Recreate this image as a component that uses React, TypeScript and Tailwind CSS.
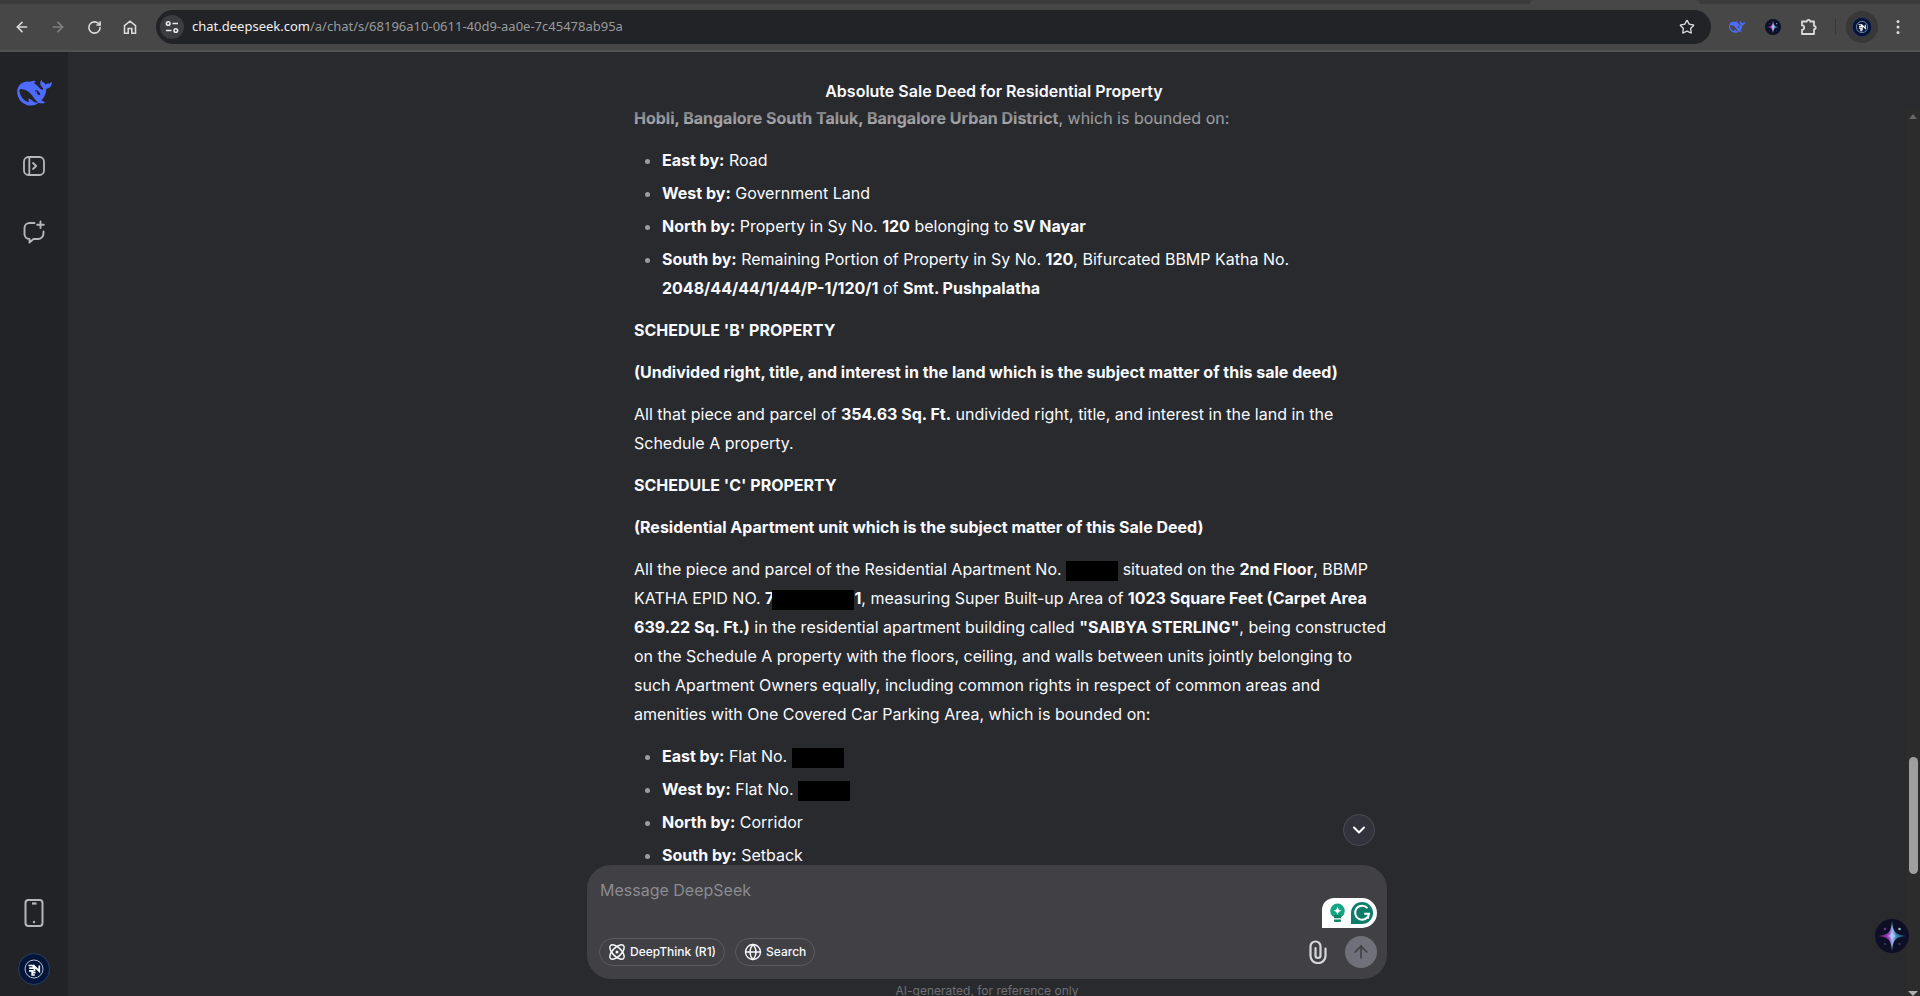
import type { ReactNode } from "react";
import { ArrowLeft, ArrowRight, ArrowUp, ChevronDown, Globe, RotateCw, Star } from "lucide-react";

const WHALE =
  "M23.748 4.482c-.254-.124-.364.113-.512.234-.051.039-.094.09-.137.136-.372.397-.806.657-1.373.626-.829-.046-1.537.214-2.163.848-.133-.782-.575-1.248-1.247-1.548-.352-.156-.708-.311-.955-.65-.172-.241-.219-.51-.305-.774-.055-.16-.11-.323-.293-.35-.2-.031-.278.136-.356.276-.313.572-.434 1.202-.422 1.84.027 1.436.633 2.58 1.838 3.393.137.093.172.187.129.323-.082.28-.18.552-.266.833-.055.179-.137.217-.329.14a5.526 5.526 0 01-1.736-1.18c-.857-.828-1.631-1.742-2.597-2.458a11.365 11.365 0 00-.689-.471c-.985-.957.13-1.743.388-1.836.27-.098.093-.432-.779-.428-.872.004-1.67.295-2.687.684a3.055 3.055 0 01-.465.137 9.597 9.597 0 00-2.883-.102c-1.885.21-3.39 1.102-4.497 2.623C.082 8.606-.231 10.684.152 12.85c.403 2.284 1.569 4.175 3.36 5.653 1.858 1.533 3.997 2.284 6.438 2.14 1.482-.085 3.133-.284 4.994-1.86.47.234.962.327 1.78.397.63.059 1.236-.03 1.705-.128.735-.156.684-.837.419-.961-2.155-1.004-1.682-.595-2.113-.926 1.096-1.296 2.746-2.642 3.392-7.003.05-.347.007-.565 0-.845-.004-.17.035-.237.23-.256a4.173 4.173 0 001.545-.475c1.396-.763 1.96-2.015 2.093-3.517.02-.23-.004-.467-.247-.588zM11.581 18c-2.089-1.642-3.102-2.183-3.52-2.16-.392.024-.321.471-.235.763.09.288.207.486.371.739.114.167.192.416-.113.603-.673.416-1.842-.14-1.897-.167-1.361-.802-2.5-1.86-3.301-3.307-.774-1.393-1.224-2.887-1.298-4.482-.02-.386.093-.522.477-.592a4.696 4.696 0 011.529-.039c2.132.312 3.946 1.265 5.468 2.774.868.86 1.525 1.887 2.202 2.891.72 1.066 1.494 2.082 2.48 2.914.348.292.625.514.891.677-.802.09-2.14.11-3.054-.614zm1-6.44a.306.306 0 01.415-.287.302.302 0 01.2.288.306.306 0 01-.31.307.303.303 0 01-.304-.308zm3.11 1.596c-.2.081-.399.151-.59.16a1.245 1.245 0 01-.798-.254c-.274-.23-.47-.358-.552-.758a1.73 1.73 0 01.016-.588c.07-.327-.008-.537-.239-.727-.187-.156-.426-.199-.688-.199a.559.559 0 01-.254-.078c-.11-.054-.2-.19-.114-.358.028-.054.16-.186.192-.21.356-.202.767-.136 1.146.016.352.144.618.408 1.001.782.391.451.462.576.685.914.176.265.336.537.445.848.067.195-.019.354-.25.452z";

function Whale({ className }: { className: string }) {
  return (
    <svg viewBox="0 3 24 18" className={className} fill="#4d6bfe" aria-hidden="true">
      <path d={WHALE} />
    </svg>
  );
}

function Avatar({ className }: { className: string }) {
  return (
    <svg viewBox="0 0 32 32" className={className} fill="none" aria-hidden="true">
      <circle cx="16" cy="16" r="15.5" fill="#03163a" stroke="#3a4f70" strokeWidth="0.7" />
      <circle cx="16" cy="16" r="9" stroke="#c9d1de" strokeWidth="0.9" />
      <path
        d="M10.500 12.500h4.700v2.600h-4M11 17.800h4.500M16.500 18.200v-4.800l4.800 4.800v-5.700M17.500 19.600h-3.300v2.400h2.600"
        stroke="#fff"
        strokeWidth="1.700"
      />
    </svg>
  );
}

function Sparkle({ className }: { className: string }) {
  return (
    <svg viewBox="0 0 34 34" className={className} aria-hidden="true">
      <defs>
        <linearGradient id="spark" x1="2" y1="17" x2="32" y2="17" gradientUnits="userSpaceOnUse">
          <stop offset="0" stopColor="#5d1c78" />
          <stop offset="0.4" stopColor="#a03fb8" />
          <stop offset="0.52" stopColor="#8fb8ea" />
          <stop offset="0.65" stopColor="#3580ad" />
          <stop offset="1" stopColor="#17466a" />
        </linearGradient>
      </defs>
      <circle cx="17" cy="17" r="17" fill="#0d0f24" />
      <path d="M17 2c.7 10.500 3.500 14.300 14 15-10.500.7-13.300 4.500-14 15-.7-10.500-3.500-14.300-14-15 10.500-.7 13.300-4.500 14-15z" fill="url(#spark)" />
      <path d="M17 11c.5 4 2 5.500 5 6-3 .5-4.500 2-5 6-.5-4-2-5.500-5-6 3-.5 4.500-2 5-6z" fill="#b9d6fa" fillOpacity="0.7" />
      <circle cx="10" cy="10" r="1.300" fill="#6d2f86" />
      <circle cx="24.500" cy="10" r="1.300" fill="#8fb4d6" />
      <circle cx="10" cy="25" r="1.100" fill="#4d2f7c" />
      <circle cx="24.500" cy="25" r="1.100" fill="#2b4f7c" />
    </svg>
  );
}

function ToolbarButton({ label, children }: { label: string; children: ReactNode }) {
  return (
    <button type="button" aria-label={label} className="flex size-5 shrink-0 items-center justify-center">
      {children}
    </button>
  );
}

function BrowserBar() {
  return (
    <header className="shrink-0 border-b-2 border-[#505356] bg-[#474747] text-[#dadada]">
      <div className="flex h-1 justify-end bg-[#3b3b3b]">
        <div className="w-[170px] rounded-t-md bg-[#474747]" />
        <div className="w-[220px]" />
      </div>
      <div className="flex h-[46px] items-center px-3">
        <div className="flex items-center gap-4">
          <ToolbarButton label="Back">
            <ArrowLeft size={16} strokeWidth={2.4} />
          </ToolbarButton>
          <ToolbarButton label="Forward">
            <ArrowRight size={16} strokeWidth={2.4} className="text-[#808080]" />
          </ToolbarButton>
          <ToolbarButton label="Reload">
            <RotateCw size={15} strokeWidth={2.5} />
          </ToolbarButton>
          <ToolbarButton label="Home">
            <svg viewBox="0 0 16 16" className="size-4" fill="none" stroke="currentColor" strokeWidth="1.600">
              <path d="M2.500 6.700 8 2.200l5.500 4.500v7.500H9.800V9.500H6.200v4.700H2.500z" />
            </svg>
          </ToolbarButton>
        </div>
        <div className="ml-4 flex h-[34px] flex-1 items-center rounded-full bg-[#212327] pr-4 pl-1">
          <button
            type="button"
            aria-label="View site information"
            className="flex size-6 shrink-0 items-center justify-center rounded-full bg-[#3c3d40] text-[#e8e8e8]"
          >
            <svg viewBox="0 0 16 16" className="size-4" fill="none" stroke="currentColor" strokeWidth="1.600">
              <circle cx="4.200" cy="4.500" r="1.800" />
              <path d="M8.500 4.500H14M2 11.500h5.500" />
              <circle cx="11.800" cy="11.500" r="1.800" />
            </svg>
          </button>
          <div className="ml-2 flex-1 font-['Noto_Sans',sans-serif] text-[13px] text-[#9a9b9d]">
            <span className="text-[#f0f0f0]">chat.deepseek.com</span>/a/chat/s/68196a10-0611-40d9-aa0e-7c45478ab95a
          </div>
          <button type="button" aria-label="Bookmark this tab">
            <Star size={16} strokeWidth={2} />
          </button>
        </div>
        <div className="ml-4 flex items-center gap-4">
          <ToolbarButton label="DeepSeek">
            <Whale className="h-3 w-4" />
          </ToolbarButton>
          <ToolbarButton label="Assistant extension">
            <Sparkle className="size-4" />
          </ToolbarButton>
          <ToolbarButton label="Extensions">
            <svg viewBox="0 0 18 18" className="size-[18px]" fill="none" stroke="currentColor" strokeWidth="1.800" strokeLinejoin="round">
              <path d="M2 3.500h4.800a1.700 1.700 0 0 1 3.400 0H14v4.300a1.700 1.700 0 0 1 0 3.400V16H2v-4.200a2.200 2.200 0 0 0 0-4.400z" />
            </svg>
          </ToolbarButton>
        </div>
        <div className="ml-4 h-4 w-px bg-[#383838]" />
        <button type="button" aria-label="Profile" className="ml-2.5 flex size-8 items-center justify-center rounded-full bg-[#383838]">
          <Avatar className="size-5" />
        </button>
        <div className="ml-2.5">
          <ToolbarButton label="Browser menu">
            <svg viewBox="0 0 4 16" className="h-4 w-1" fill="currentColor">
              <circle cx="2" cy="2.500" r="1.500" />
              <circle cx="2" cy="8" r="1.500" />
              <circle cx="2" cy="13.500" r="1.500" />
            </svg>
          </ToolbarButton>
        </div>
      </div>
    </header>
  );
}

function Sidebar() {
  return (
    <nav className="flex w-[68px] shrink-0 flex-col items-center bg-[#212327] pt-7 pb-[11px] text-[#b4b7bc]">
      <a href="#home" aria-label="DeepSeek home">
        <Whale className="h-[26px] w-[35px]" />
      </a>
      <button type="button" aria-label="Open sidebar" className="mt-12">
        <svg viewBox="0 0 24 24" className="size-6" fill="none" stroke="currentColor" strokeWidth="1.800">
          <rect x="2" y="3" width="20" height="18" rx="4.500" />
          <path d="M7.300 3v18" />
          <path d="m11 9 3.200 3-3.200 3" strokeLinecap="round" strokeLinejoin="round" />
        </svg>
      </button>
      <button type="button" aria-label="New chat" className="mt-[42px]">
        <svg viewBox="0 0 24 24" className="size-6" fill="none" stroke="currentColor" strokeWidth="1.900" strokeLinecap="round" strokeLinejoin="round">
          <path d="M12.500 3H7.500A5 5 0 0 0 2.500 8v6a5 5 0 0 0 5 5v3.500l4-3.500H16a5.500 5.500 0 0 0 5.500-5.500v-2" />
          <path d="M18.500 1.500v6.500M15.200 4.800h6.600" />
        </svg>
      </button>
      <button type="button" aria-label="Get app" className="mt-auto">
        <svg viewBox="0 0 20 28" className="h-7 w-5" fill="none" stroke="currentColor" strokeWidth="2">
          <rect x="1.500" y="1" width="17" height="26" rx="3" />
          <path d="M8 4.500h4.500" strokeWidth="2.200" />
          <circle cx="10" cy="23" r="1.200" fill="currentColor" stroke="none" />
        </svg>
      </button>
      <button type="button" aria-label="Account" className="mt-[26px]">
        <Avatar className="size-8" />
      </button>
    </nav>
  );
}

function Item({ label, children }: { label: string; children: ReactNode }) {
  return (
    <li>
      <strong>{label} by:</strong> {children}
    </li>
  );
}

function Redacted({ className }: { className: string }) {
  return <span className={`inline-block h-5 bg-black align-middle ${className}`} />;
}

function Deed() {
  return (
    <article className="flex flex-col gap-[13px] pl-[47px] text-base leading-[29px] text-[#f8faff] [&_strong]:font-bold">
      <p>
        <strong>Hobli, Bangalore South Taluk, Bangalore Urban District</strong>, which is bounded on:
      </p>
      <ul className="flex list-disc flex-col gap-1 pl-7 marker:text-[#9a9ca3]">
        <Item label="East">Road</Item>
        <Item label="West">Government Land</Item>
        <Item label="North">
          Property in Sy No. <strong>120</strong> belonging to <strong>SV Nayar</strong>
        </Item>
        <Item label="South">
          Remaining Portion of Property in Sy No. <strong>120</strong>, Bifurcated BBMP Katha No.{" "}
          <strong>2048/44/44/1/44/P-1/120/1</strong> of <strong>Smt. Pushpalatha</strong>
        </Item>
      </ul>
      <p>
        <strong>SCHEDULE 'B' PROPERTY</strong>
      </p>
      <p>
        <strong>(Undivided right, title, and interest in the land which is the subject matter of this sale deed)</strong>
      </p>
      <p>
        All that piece and parcel of <strong>354.63 Sq. Ft.</strong> undivided right, title, and interest in the land in
        the Schedule A property.
      </p>
      <p>
        <strong>SCHEDULE 'C' PROPERTY</strong>
      </p>
      <p>
        <strong>(Residential Apartment unit which is the subject matter of this Sale Deed)</strong>
      </p>
      <p>
        All the piece and parcel of the Residential Apartment No. <Redacted className="w-[52px]" /> situated on the{" "}
        <strong>2nd Floor</strong>, BBMP KATHA EPID NO.{" "}
        <strong>
          7<Redacted className="-ml-0.5 w-[82px]" />1
        </strong>
        , measuring Super Built-up Area of <strong>1023 Square Feet (Carpet Area 639.22 Sq. Ft.)</strong> in the
        residential apartment building called <strong>"SAIBYA STERLING"</strong>, being constructed on the Schedule A
        property with the floors, ceiling, and walls between units jointly belonging to such Apartment Owners equally,
        including common rights in respect of common areas and amenities with One Covered Car Parking Area, which is
        bounded on:
      </p>
      <ul className="flex list-disc flex-col gap-1 pl-7 marker:text-[#9a9ca3]">
        <Item label="East">
          Flat No. <Redacted className="w-[52px]" />
        </Item>
        <Item label="West">
          Flat No. <Redacted className="w-[52px]" />
        </Item>
        <Item label="North">Corridor</Item>
        <Item label="South">Setback</Item>
      </ul>
    </article>
  );
}

function GrammarlyBadge() {
  return (
    <div className="absolute right-2.5 bottom-[51px] flex h-[30px] w-[55px] items-center gap-1.5 rounded-tl-xl rounded-r-[15px] bg-white pl-2">
      <svg viewBox="0 0 15 20" className="h-5 w-[15px]" aria-hidden="true">
        <circle cx="7.500" cy="7.800" r="7.300" fill="#15a683" />
        <path d="M4 12h7v3.300H4zM4 16.500h7v1.200c0 .8-.6 1.300-1.300 1.300H5.300C4.600 19 4 18.500 4 17.700z" fill="#0f8468" />
        <path d="M7.500 3.500c.5 2.800 1.500 3.800 4.200 4.300-2.700.5-3.700 1.500-4.200 4.300-.5-2.800-1.500-3.800-4.200-4.300 2.700-.5 3.700-1.500 4.200-4.300z" fill="#fff" />
      </svg>
      <svg viewBox="0 0 22 22" className="size-[22px]" fill="none" aria-hidden="true">
        <path d="M0 22V11a11 11 0 1 1 11 11z" fill="#0e7c6b" />
        <path d="M16.500 6.200A7 7 0 1 0 18 11.800h-4.800M18 11.800l-1.200 4.700" stroke="#fff" strokeWidth="2" />
      </svg>
    </div>
  );
}

function ToggleChip({ icon, children }: { icon: ReactNode; children: ReactNode }) {
  return (
    <button
      type="button"
      className="flex h-7 items-center gap-1 rounded-full border border-[#5a5a60] px-2 text-xs font-medium text-[#f8faff]"
    >
      {icon}
      {children}
    </button>
  );
}

function Composer() {
  return (
    <form className="relative rounded-3xl bg-[#404045] px-3 pt-[11px] pb-[13px]">
      <textarea
        aria-label="Message DeepSeek"
        placeholder="Message DeepSeek"
        rows={2}
        className="block h-[62px] w-full resize-none px-px text-base leading-7 text-[#f8faff] outline-none placeholder:text-[#8b8b91]"
      />
      <div className="flex h-7 items-center gap-2.5">
        <ToggleChip
          icon={
            <svg viewBox="0 0 18 18" className="size-[18px]" fill="none" stroke="currentColor" strokeWidth="1.500">
              <ellipse cx="9" cy="9" rx="9.200" ry="4.400" transform="rotate(45 9 9)" />
              <ellipse cx="9" cy="9" rx="9.200" ry="4.400" transform="rotate(-45 9 9)" />
              <circle cx="9" cy="9" r="1.500" fill="currentColor" stroke="none" />
            </svg>
          }
        >
          DeepThink (R1)
        </ToggleChip>
        <ToggleChip icon={<Globe size={18} strokeWidth={1.8} />}>Search</ToggleChip>
        <button type="button" aria-label="Attach file" className="ml-auto text-[#d5d6da]">
          <svg viewBox="0 0 18 24" className="h-6 w-[18px]" fill="none" stroke="currentColor" strokeWidth="2.200" strokeLinecap="round">
            <path d="M16.500 8.500V16a7 7 0 0 1-7.500 7A7 7 0 0 1 1.500 16V6.500A4.800 4.800 0 0 1 6.500 1.500a4.800 4.800 0 0 1 5 5V15.500a2.500 2.500 0 0 1-5 0V8" />
          </svg>
        </button>
        <button
          type="submit"
          aria-label="Send message"
          className="-mr-0.5 ml-2 flex size-8 items-center justify-center rounded-full bg-[#70707a] text-[#404045]"
        >
          <ArrowUp size={20} strokeWidth={2} />
        </button>
      </div>
      <GrammarlyBadge />
      <button
        type="button"
        aria-label="Scroll to bottom"
        className="absolute right-3 -top-[51px] flex size-8 items-center justify-center rounded-full border border-[#4b4b55] bg-[#33333e] text-white"
      >
        <ChevronDown size={20} strokeWidth={2.4} />
      </button>
    </form>
  );
}

function Scrollbar() {
  return (
    <div className="mt-1.5 flex w-3.5 shrink-0 flex-col items-center bg-[#2c2c2c]">
      <div className="mt-1 border-x-4 border-b-5 border-x-transparent border-b-[#666]" />
      <div className="flex-[640]" />
      <div className="h-[117px] w-[9px] rounded-full bg-[#9f9f9f]" />
      <div className="flex-[117]" />
      <div className="border-x-5 border-t-5 border-x-transparent border-t-[#b0b0b0]" />
    </div>
  );
}

export default function App() {
  return (
    <div className="flex h-screen flex-col overflow-hidden bg-[#292a2d] font-['Inter',sans-serif]">
      <BrowserBar />
      <div className="flex min-h-0 flex-1">
        <Sidebar />
        <main className="relative flex min-w-0 flex-1 flex-col">
          <h1 className="shrink-0 pt-[27px] pb-px text-center text-base leading-6 font-semibold text-[#f8faff]">
            Absolute Sale Deed for Residential Property
          </h1>
          <div className="flex min-h-0 flex-1">
            <div className="flex min-w-0 flex-1 flex-col items-center">
              <div className="relative min-h-0 w-full max-w-[800px] flex-1 overflow-hidden">
                <Deed />
                <div className="absolute inset-x-0 top-0 h-8 bg-linear-to-b from-[#292a2d]/75 via-[#292a2d]/45 to-[#292a2d]/20" />
              </div>
              <div className="w-full max-w-[800px] shrink-0">
                <Composer />
                <p className="h-[17px] pt-1 text-center text-xs text-[#6f7076]">AI-generated, for reference only</p>
              </div>
            </div>
            <Scrollbar />
          </div>
          <button type="button" aria-label="Open assistant" className="absolute right-[11px] bottom-[43px]">
            <Sparkle className="size-[34px]" />
          </button>
        </main>
      </div>
    </div>
  );
}
